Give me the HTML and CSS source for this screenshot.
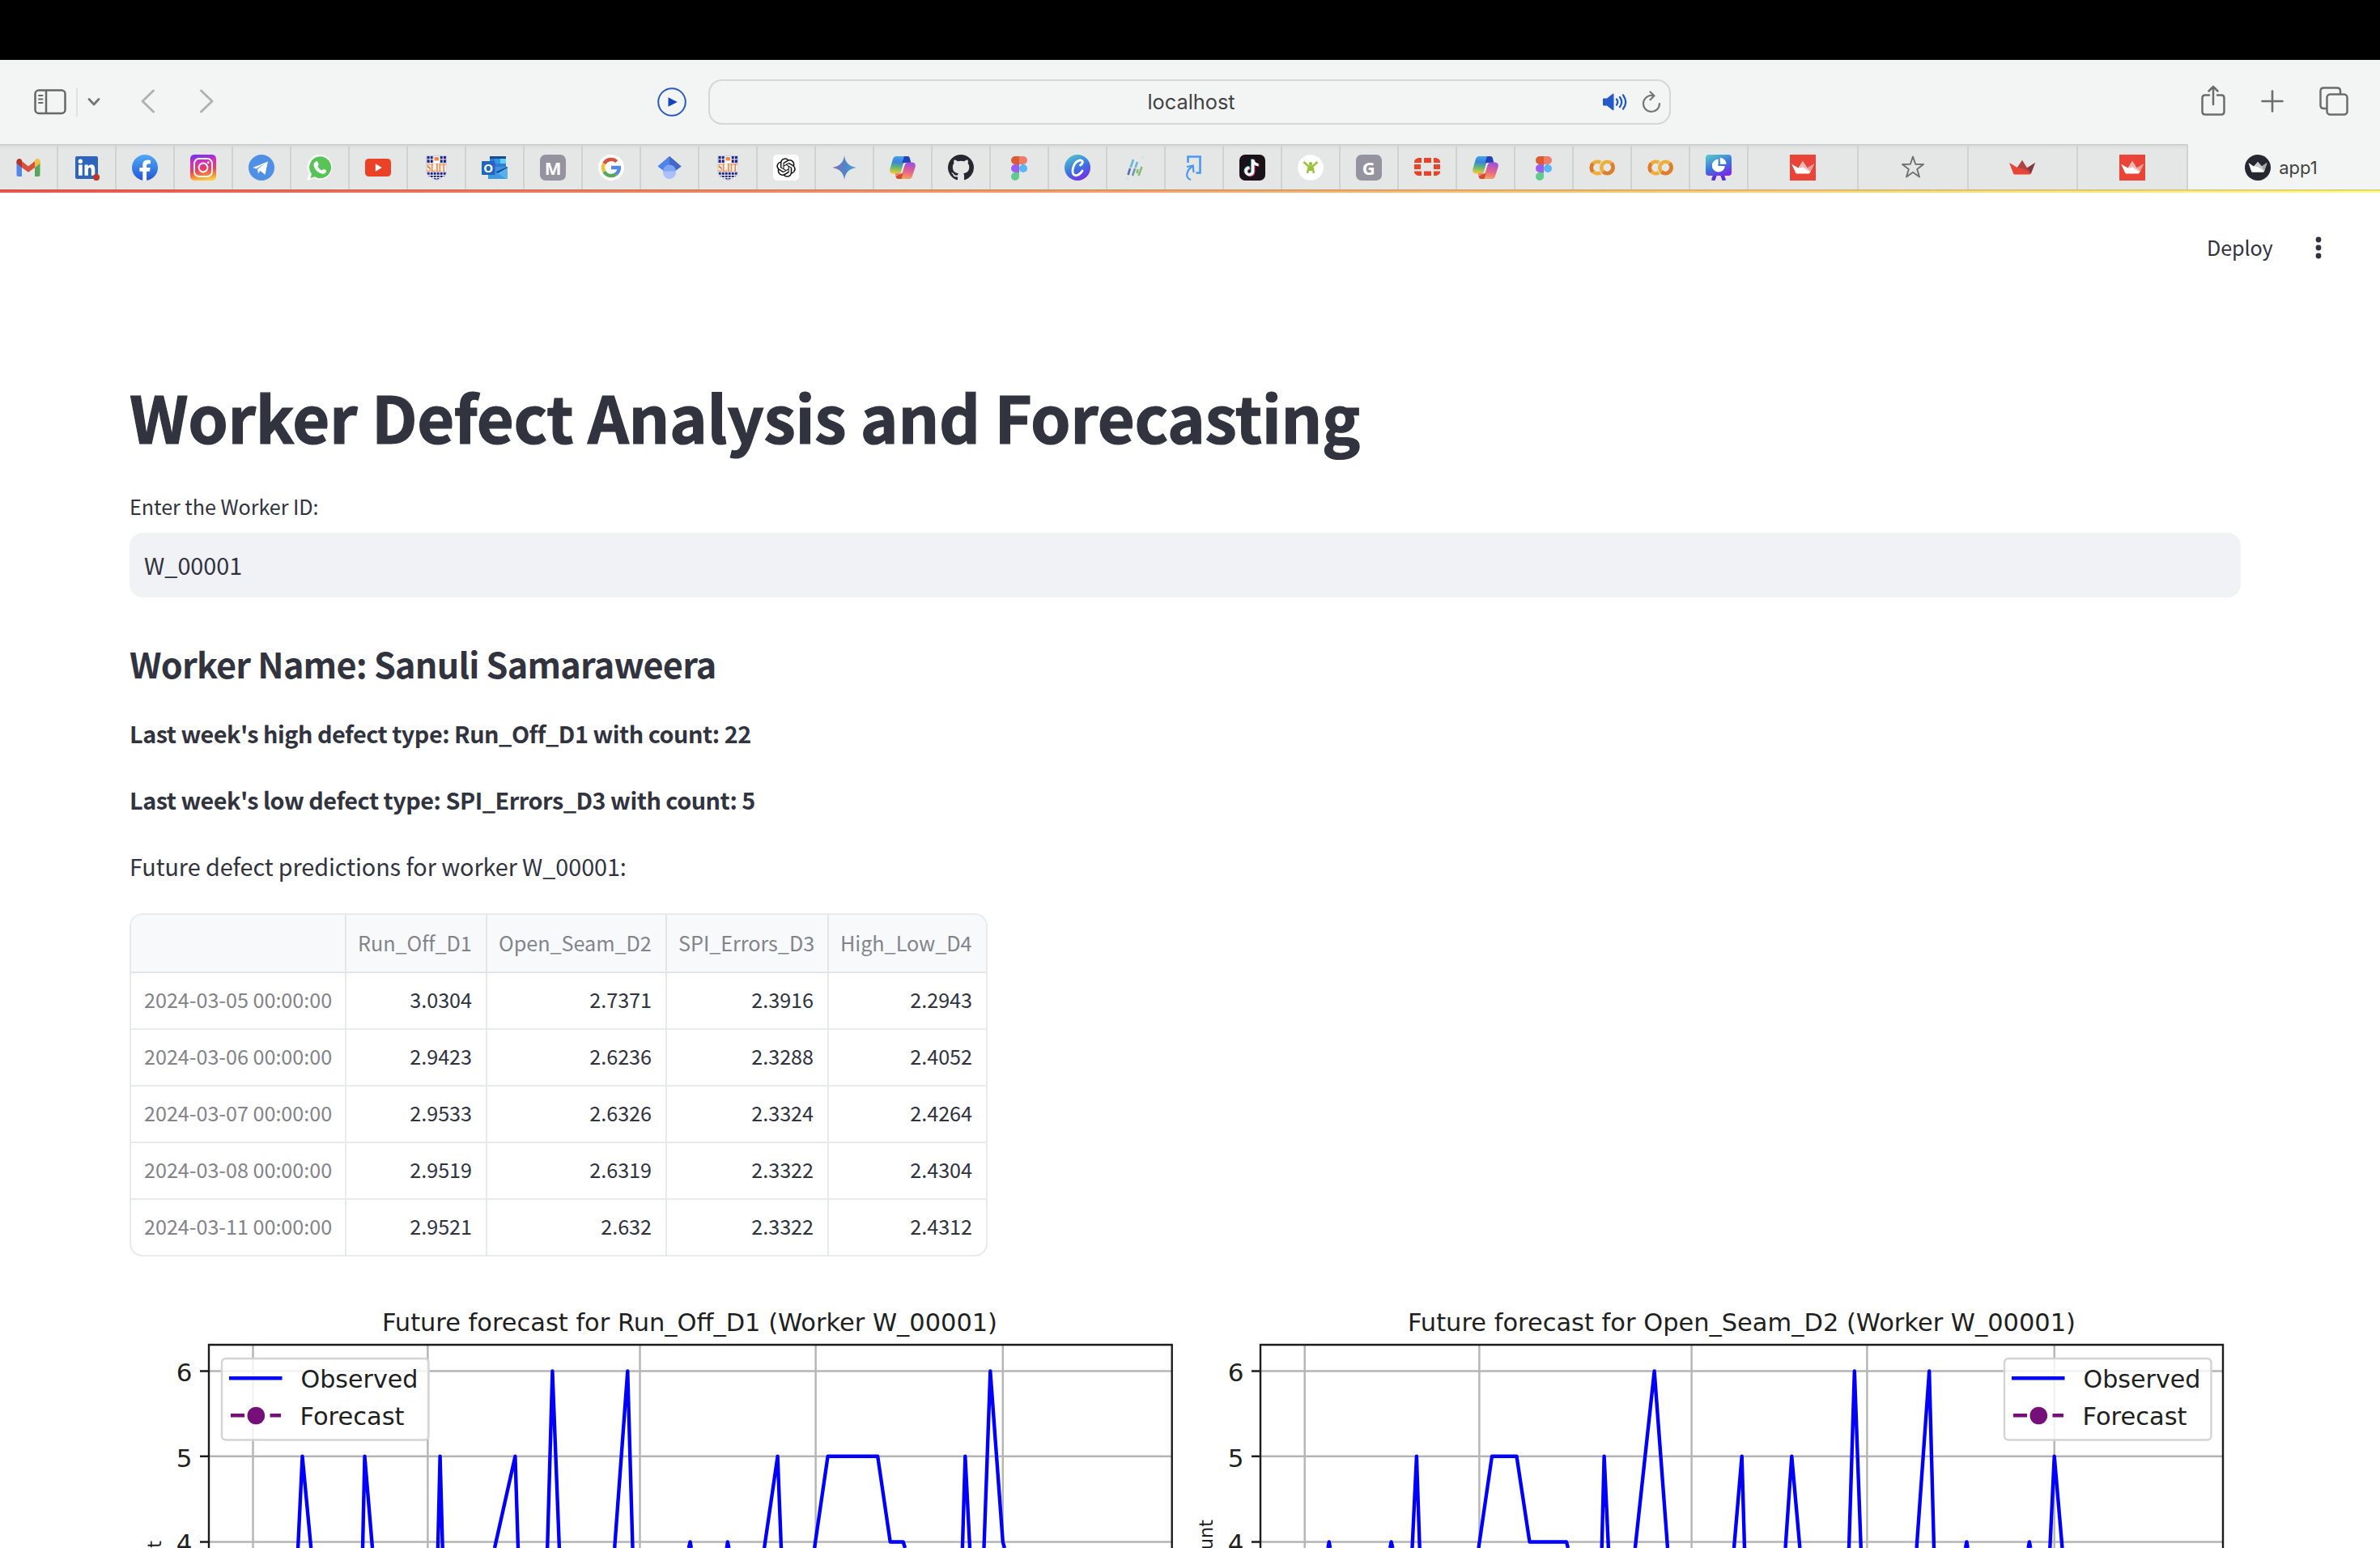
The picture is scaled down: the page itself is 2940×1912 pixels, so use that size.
FILE: index.html
```html
<!DOCTYPE html>
<html lang="en">
<head>
<meta charset="utf-8">
<title>app1</title>
<link rel="stylesheet" href="styles.css">
</head>
<body>
<svg class="defs" width="0" height="0" aria-hidden="true">
  <defs>
    <linearGradient id="g-fb" x1="0" y1="0" x2="0" y2="1"><stop offset="0" stop-color="#4fa9f7"/><stop offset="1" stop-color="#2457d6"/></linearGradient>
    <linearGradient id="g-ig" x1="0.2" y1="0" x2="0.35" y2="1"><stop offset="0" stop-color="#6a34f5"/><stop offset="0.3" stop-color="#d52fc0"/><stop offset="0.6" stop-color="#f03a5c"/><stop offset="0.85" stop-color="#f88a38"/><stop offset="1" stop-color="#fbc840"/></linearGradient>
    <linearGradient id="g-gem" x1="0" y1="0" x2="1" y2="0"><stop offset="0" stop-color="#8a68b4"/><stop offset="0.55" stop-color="#4f86c9"/><stop offset="1" stop-color="#4aa3e0"/></linearGradient>
    <linearGradient id="g-canva" x1="0.2" y1="0" x2="0.7" y2="1"><stop offset="0" stop-color="#55c4cc"/><stop offset="0.55" stop-color="#3b72e0"/><stop offset="1" stop-color="#7a2be6"/></linearGradient>
    <linearGradient id="g-cpa" x1="0.5" y1="0" x2="0.4" y2="1"><stop offset="0" stop-color="#3fa4ee"/><stop offset="0.35" stop-color="#3c83d8"/><stop offset="0.65" stop-color="#62b872"/><stop offset="1" stop-color="#f2c935"/></linearGradient>
    <linearGradient id="g-cpb" x1="0.6" y1="0" x2="0.4" y2="1"><stop offset="0" stop-color="#9a50e2"/><stop offset="0.5" stop-color="#e3608f"/><stop offset="1" stop-color="#f7a456"/></linearGradient>

    <symbol id="i-sliit" viewBox="0 0 32 32">
      <path d="M4 1.500h24.500v20q0 7-12.250 10Q4 28.500 4 21.500z" fill="#1c2580" stroke="#c6c8e4" stroke-width="1.200"/>
      <path d="M8.200 2v28M12.200 2v29M16.200 2v29M20.200 2v29M24.200 2v28M4.500 5.800h23.500M5 25.300h22M8 28.500h17" stroke="#fff" stroke-width="1"/>
      <path d="M4.200 10h24.200v11.800H4.200z" fill="#fdf6f2"/>
      <path d="M12.500 2h7.500v8h-7.500z" fill="#fff"/><path d="M13.500 3h5.500v4.500h-5.500z" fill="#f08a4a"/>
      <text x="16.200" y="21" text-anchor="middle" textLength="24" lengthAdjust="spacingAndGlyphs" class="t-sliit">SLIIT</text>
    </symbol>
    <symbol id="i-copilot" viewBox="0 0 32 32">
      <path d="M8 2h13.500q3 0 3.500 3l1 4h-7l-4 12q-1 2.500-4 2.500H4Q-.8 23 .4 17.500L4 5.500Q5 2 8 2z" fill="url(#g-cpa)"/>
      <path d="M18 2h4q2.500 0 3 3l1.200 5H15.500z" fill="#2442b8"/>
      <path d="M24 30H11q-3 0-3.500-3l-.9-4H14l4-11q1-2.500 4-2.500h6q4.800.5 3.600 6L28 26.500Q27 30 24 30z" fill="url(#g-cpb)"/>
      <path d="M14.500 30H11q-3 0-3.500-3.500H8l6.500-3h2z" fill="#d8482c"/>
      <path d="M17 10.500h4q-2 .5-2.700 3l-2.500 8.500q-.7 1.700-3.800 1.800 1.500-.5 2-2.300z" fill="#eef0ef"/>
    </symbol>
    <symbol id="i-figma" viewBox="0 0 32 32">
      <path d="M16 2h-5a5 5 0 0 0 0 10h5z" fill="#dd5b33"/><path d="M16 2h5a5 5 0 0 1 0 10h-5z" fill="#ee7c6a"/>
      <path d="M16 12h-5a5 5 0 0 0 0 10h5z" fill="#9a5cf5"/><circle cx="21" cy="17" r="5" fill="#58b6f8"/>
      <path d="M16 22h-5a5 5 0 1 0 5 5z" fill="#60cc8c"/>
    </symbol>
    <symbol id="i-colab" viewBox="0 0 32 32">
      <g fill="none" stroke-width="4.600"><path d="M14.200 9.800a7.300 7.300 0 1 0 0 12.400" stroke="#eeae3b"/><path d="M4.800 10.800a7.300 7.300 0 0 0 0 10.400" stroke="#dc7e30"/>
      <circle cx="22.500" cy="16" r="7.300" stroke="#eeae3b"/><path d="M27.600 10.800a7.300 7.300 0 0 1-10.200 10.400" stroke="#dc7e30"/></g>
    </symbol>
    <symbol id="i-crown-red" viewBox="0 0 32 32">
      <path d="M0 0h32v32H0z" fill="#ea4439"/>
      <path d="M2 11.500l8.500 5L16 8l5.500 8.500L30 11.500 25 22q-.5 1.500-2 1.500H9q-1.500 0-2-1.500z" fill="#fff"/>
      <path d="M16 8l5.500 8.500 3 4.500-8-5.500-5.500 1z" fill="#f7b5b1"/><path d="M30 11.500L25 21l-3.500-4.500z" fill="#f49a95"/>
    </symbol>
  </defs>
</svg>

<div class="menubar"></div>

<header class="toolbar">
  <div class="tools tools-left">
    <svg class="ic-side" viewBox="0 0 40 32"><g fill="none" stroke="#666867" stroke-width="2.500"><rect x="1.500" y="1.500" width="37" height="28.500" rx="4.500"/><path d="M15 2v28"/><path d="M6 8h4.500M6 12.500h4.500M6 17h4.500" stroke-width="2" stroke-linecap="round"/></g></svg>
    <span class="divider"></span>
    <svg class="ic-chev" viewBox="0 0 16 12"><path d="M2 2.500l6 6.500 6-6.500" fill="none" stroke="#747675" stroke-width="2.800" stroke-linecap="round" stroke-linejoin="round"/></svg>
    <svg class="ic-back" viewBox="0 0 18 30"><path d="M15.500 2L2 15l13.500 13" fill="none" stroke="#b0b2b1" stroke-width="2.900" stroke-linecap="round" stroke-linejoin="round"/></svg>
    <svg class="ic-fwd" viewBox="0 0 18 30"><path d="M2.500 2L16 15 2.500 28" fill="none" stroke="#b0b2b1" stroke-width="2.900" stroke-linecap="round" stroke-linejoin="round"/></svg>
  </div>
  <svg class="ic-play" viewBox="0 0 38 38"><circle cx="19" cy="19" r="16.800" fill="none" stroke="#2c58c8" stroke-width="2"/><path d="M14.500 13.200l11.300 5.800-11.300 5.800z" fill="#1544c0"/></svg>
  <div class="address">
    <span class="host">localhost</span>
    <svg class="ic-sound" viewBox="0 0 32 26"><path d="M1 9.500q0-1 1-1h4l7-5.500q1.500-1 1.500.5v19q0 1.500-1.500.5L6 17.500H2q-1 0-1-1z" fill="#2459c9"/><path d="M18 9.500q2.500 3.500 0 7M22 7q4.500 6 0 12M26 4.500q6.500 8.500 0 17" fill="none" stroke="#2459c9" stroke-width="2.300" stroke-linecap="round"/></svg>
    <svg class="ic-reload" viewBox="0 0 24 30"><path d="M14.500 7.300A10 10 0 1 0 22 17" fill="none" stroke="#747675" stroke-width="2.200" stroke-linecap="round"/><path d="M10.500 2.500l5 4.700-5 5" fill="none" stroke="#747675" stroke-width="2.200" stroke-linecap="round" stroke-linejoin="round"/></svg>
  </div>
  <div class="tools tools-right">
    <svg class="ic-share" viewBox="0 0 30 38"><g fill="none" stroke="#6b6d6c" stroke-width="2.500" stroke-linecap="round" stroke-linejoin="round"><path d="M10 12.500H5q-3.500 0-3.500 3.500v17q0 3.500 3.500 3.500h20q3.500 0 3.500-3.500V16q0-3.500-3.500-3.500h-5"/><path d="M15 24V2M9.500 7.500L15 2l5.500 5.500"/></g></svg>
    <svg class="ic-plus" viewBox="0 0 28 28"><path d="M14 1.500v25M1.500 14h25" stroke="#6b6d6c" stroke-width="2.600" stroke-linecap="round"/></svg>
    <svg class="ic-tabs" viewBox="0 0 36 36"><g fill="none" stroke="#6b6d6c" stroke-width="2.500"><path d="M9 27H5.500Q1.500 27 1.500 23V5.500q0-4 4-4H22q4 0 4 4V9"/><rect x="9.500" y="9.500" width="25" height="25" rx="4"/></g></svg>
  </div>
</header>

<nav class="tabs">
  <div class="tab"><svg viewBox="0 0 32 32"><path d="M1.500 8v17q0 2 2 2H8V12z" fill="#5387ec"/><path d="M30.500 8v17q0 2-2 2H24V12z" fill="#58a55d"/><path d="M8 16V8l8 6.500L24 8v8l-8 5.800z" fill="#d9503f"/><path d="M1.500 8.500q0-3.500 3.500-3.500 1 0 2 .8l1 1V16l-6.500-5z" fill="#b4332b"/><path d="M30.500 8.500Q30.500 5 27 5q-1 0-2 .8L24 7v9l6.500-5z" fill="#f3bf42"/></svg></div>
  <div class="tab"><svg viewBox="0 0 32 32"><rect x="2" y="2" width="28" height="28" rx="2" fill="#2c65bb"/><circle cx="8.300" cy="8.300" r="2.700" fill="#fff"/><path d="M6 12.500h4.700v13.300H6zM13.500 12.500h4.300v2q1.500-2.300 4.200-2.300 4.300 0 4.300 5.800v7.800h-4.500v-7q0-2.900-2-2.900-1.900 0-1.900 3v6.900h-4.400z" fill="#fff"/><circle cx="28" cy="28" r="4.200" fill="#c1352a"/></svg></div>
  <div class="tab"><svg viewBox="0 0 32 32"><circle cx="16" cy="16" r="16" fill="url(#g-fb)"/><path d="M13.300 32V20.700H9.400V16h3.900v-3.500q0-6 6-6 1.900 0 3.800.4v4.300h-2.300q-2.700 0-2.700 2.600V16h4.600l-.8 4.700h-3.800V32z" fill="#fff"/></svg></div>
  <div class="tab"><svg viewBox="0 0 32 32"><rect width="32" height="32" rx="5" fill="url(#g-ig)"/><g fill="none" stroke="#fff" stroke-width="2"><rect x="5" y="5" width="22" height="22" rx="6"/><circle cx="16" cy="16" r="5.400"/></g><circle cx="22.200" cy="9.800" r="1.400" fill="#fff"/></svg></div>
  <div class="tab"><svg viewBox="0 0 32 32"><circle cx="16" cy="16" r="16" fill="#4f8fe6"/><path d="M5.500 16L24 8.500l-3.500 16.300L14.500 20l-2.700 3.300-.6-5.300L20 11.300 9.500 17.600z" fill="#fff"/></svg></div>
  <div class="tab"><svg viewBox="0 0 32 32"><path d="M16.500 0A15.500 15.500 0 1 1 9 29.300L0 32l2.500-8.800A15.500 15.500 0 0 1 16.500 0z" fill="#fbfdfb"/><path d="M16.500 2.300a13.500 13.500 0 1 1-7 25l-5 1.700 1.500-5a13.500 13.500 0 0 1 10.500-21.700z" fill="#58c357"/><path d="M11.500 8.500q1.500-.5 2 .6l1.200 3q.2.700-1.400 2.500 2 3.700 5.400 5 1.500-2 2-1.900l3.200 1.500q.6.600-.2 2.500-1.500 2.200-4 2-8.500-1.500-11.200-10-.2-4 3-5.200z" fill="#fff"/></svg></div>
  <div class="tab"><svg viewBox="0 0 32 32"><rect y="5" width="32" height="22" rx="4.500" fill="#ea4127"/><path d="M12.800 11.300l8 4.700-8 4.700z" fill="#fff"/></svg></div>
  <div class="tab"><svg><use href="#i-sliit"/></svg></div>
  <div class="tab"><svg viewBox="0 0 32 32"><path d="M10 2h20v14H10z" fill="#2f7cd0"/><path d="M10 2h20v3H10z" fill="#194a92"/><path d="M23 5h7v6h-7z" fill="#5ed0fb"/><path d="M16 5h7v6h-7z" fill="#3797e4"/><path d="M8 15h24v15H8z" fill="#3a94e0"/><path d="M32 15v14L17 21.500z" fill="#1c4b97"/><path d="M8 30l24-14v14z" fill="#55b0ec"/><path d="M8 15v15h22z" fill="#3f99e2"/><rect y="8" width="16.500" height="17" rx="1" fill="#2165c0"/><text x="8.200" y="21.500" text-anchor="middle" class="t-o">O</text></svg></div>
  <div class="tab"><svg viewBox="0 0 32 32"><rect width="32" height="32" rx="7" fill="#94939f"/><text x="16" y="25" text-anchor="middle" class="t-letter">M</text></svg></div>
  <div class="tab"><svg viewBox="0 0 32 32"><circle cx="16" cy="16" r="16" fill="#fff"/><g fill="none" stroke-width="4.400"><path d="M22.800 8.500A10 10 0 0 0 7.300 11" stroke="#d9503f"/><path d="M7.300 11a10 10 0 0 0 0 10" stroke="#f3bf42"/><path d="M7.300 21a10 10 0 0 0 15 2.800" stroke="#58a55d"/><path d="M22.300 23.800Q26 20.500 25.800 16H16" stroke="#5387ec"/></g></svg></div>
  <div class="tab"><svg viewBox="0 0 32 32"><path d="M1.500 14.500L16 2v12z" fill="#5c8cf0"/><path d="M16 2l14.500 12.500-6.500 5L8 19.500l-6.500-5z" fill="#4f83ec"/><path d="M16 2l14.500 12.500-6.500 5-8-5z" fill="#4468c4"/><circle cx="16" cy="22" r="8" fill="#a8c1fa"/><path d="M8 20.500a8 8 0 0 1 16 0z" fill="#7fa5f5"/></svg></div>
  <div class="tab"><svg><use href="#i-sliit"/></svg></div>
  <div class="tab"><svg viewBox="0 0 32 32"><rect width="32" height="32" rx="5" fill="#fff"/><g transform="translate(4.300 4.300) scale(.98)"><path fill="#151515" d="M22.282 9.821a5.985 5.985 0 0 0-.516-4.910 6.046 6.046 0 0 0-6.510-2.900A6.065 6.065 0 0 0 4.981 4.182a5.985 5.985 0 0 0-3.998 2.900 6.046 6.046 0 0 0 .743 7.097 5.980 5.980 0 0 0 .510 4.911 6.051 6.051 0 0 0 6.515 2.900A5.985 5.985 0 0 0 13.260 24a6.056 6.056 0 0 0 5.772-4.206 5.990 5.990 0 0 0 3.998-2.900 6.056 6.056 0 0 0-.748-7.073zM13.260 22.430a4.476 4.476 0 0 1-2.876-1.040l.141-.081 4.779-2.758a.795.795 0 0 0 .393-.681v-6.737l2.020 1.168a.071.071 0 0 1 .038.052v5.583a4.504 4.504 0 0 1-4.495 4.494zM3.600 18.304a4.471 4.471 0 0 1-.535-3.014l.142.085 4.783 2.759a.771.771 0 0 0 .780 0l5.843-3.369v2.332a.080.080 0 0 1-.033.062L9.740 19.950a4.500 4.500 0 0 1-6.140-1.646zM2.341 7.896a4.485 4.485 0 0 1 2.366-1.973V11.600a.766.766 0 0 0 .388.676l5.815 3.355-2.020 1.168a.076.076 0 0 1-.071 0l-4.830-2.786A4.504 4.504 0 0 1 2.341 7.896zm16.597 3.855l-5.833-3.387L15.119 7.200a.076.076 0 0 1 .071 0l4.830 2.791a4.494 4.494 0 0 1-.676 8.105v-5.678a.790.790 0 0 0-.407-.667zm2.010-3.023l-.141-.085-4.774-2.782a.776.776 0 0 0-.785 0L9.409 9.230V6.897a.066.066 0 0 1 .028-.061l4.830-2.787a4.500 4.500 0 0 1 6.680 4.660zm-12.640 4.135l-2.020-1.164a.080.080 0 0 1-.038-.057V6.075a4.500 4.500 0 0 1 7.375-3.453l-.142.080L8.704 5.460a.795.795 0 0 0-.393.681zm1.097-2.365l2.602-1.500 2.607 1.500v2.999l-2.597 1.500-2.607-1.500z"/></g></svg></div>
  <div class="tab"><svg viewBox="0 0 32 32"><path d="M16 1q1.500 13 15 15-13.500 2-15 15-1.500-13-15-15Q14.500 14 16 1z" fill="url(#g-gem)"/></svg></div>
  <div class="tab"><svg><use href="#i-copilot"/></svg></div>
  <div class="tab"><svg viewBox="0 0 16 16"><path fill="#24292f" d="M8 0C3.580 0 0 3.580 0 8c0 3.540 2.290 6.530 5.470 7.590.4.070.55-.170.55-.380 0-.190-.010-.820-.010-1.490-2.010.370-2.530-.490-2.690-.940-.090-.230-.480-.940-.820-1.130-.280-.150-.680-.520-.010-.530.630-.010 1.080.580 1.230.820.720 1.210 1.870.870 2.330.660.070-.520.280-.870.510-1.070-1.780-.2-3.640-.890-3.640-3.950 0-.870.310-1.590.820-2.150-.080-.2-.360-1.020.080-2.120 0 0 .670-.210 2.200.820.640-.180 1.320-.270 2-.270s1.360.090 2 .270c1.530-1.040 2.200-.820 2.200-.820.440 1.100.160 1.920.080 2.120.510.560.820 1.270.820 2.150 0 3.070-1.870 3.750-3.650 3.950.290.250.540.730.540 1.480 0 1.070-.010 1.930-.010 2.200 0 .210.150.460.550.380A8.010 8.010 0 0 0 16 8c0-4.420-3.580-8-8-8z"/></svg></div>
  <div class="tab"><svg><use href="#i-figma"/></svg></div>
  <div class="tab"><svg viewBox="0 0 32 32"><circle cx="16" cy="16" r="16" fill="url(#g-canva)"/><path d="M19.500 13q3-1.500 2.800-4.500-.7-2-3.500-1.500-5 1-7.500 7-2.200 6-.8 9.500 1.800 3 5 2 4-1.300 6.500-5.500" fill="none" stroke="#fff" stroke-width="2.800" stroke-linecap="round"/></svg></div>
  <div class="tab"><svg viewBox="0 0 32 32" class="soft"><path d="M13 6L9.500 16M18 9l-2.500 7" stroke="#6ab7dd" stroke-width="2.600"/><path d="M9 17l-2.500 8" stroke="#4f6fae" stroke-width="2.600"/><path d="M15 17l-3 9" stroke="#6f95a8" stroke-width="2.400"/><path d="M23.500 15l-4 11M18.500 18l-1 5" stroke="#86bf78" stroke-width="2.600"/><path d="M22 5l4-3M4 29l4 2" stroke="#cfe4ea" stroke-width="2"/></svg></div>
  <div class="tab"><svg viewBox="0 0 32 32"><g fill="none" stroke="#4b98f5" stroke-width="2.600"><path d="M8.500 10V2.500h15v20h-5"/><path d="M12 31q-6-2-4.500-8 1-5 6.500-8.500M7 15l7.800-1.500.6 8.500" stroke-width="2.200"/></g></svg></div>
  <div class="tab"><svg viewBox="0 0 32 32"><rect width="32" height="32" rx="7" fill="#1b1219"/><g fill="none" stroke-width="3.200"><path d="M16.800 6v14.500a4.300 4.300 0 1 1-4.300-4.300M16.800 7q1 5 6.700 5.600" stroke="#5ee0e2" transform="translate(-1 -.6)"/><path d="M16.800 6v14.500a4.300 4.300 0 1 1-4.300-4.300M16.800 7q1 5 6.700 5.600" stroke="#e8355c" transform="translate(1 .8)"/><path d="M16.800 6v14.500a4.300 4.300 0 1 1-4.300-4.300M16.800 7q1 5 6.700 5.600" stroke="#fff"/></g></svg></div>
  <div class="tab"><svg viewBox="0 0 32 32"><circle cx="16" cy="16" r="15.800" fill="#fff"/><circle cx="16" cy="11.300" r="2.200" fill="#9bc23c"/><path d="M7.500 9l6 5.500h5l6-5.500M16 14v5M13.500 16l-1.500 7M18.500 16l1.500 7" fill="none" stroke="#9bc23c" stroke-width="2.500"/><path d="M12.500 14h7l-1 6h-5z" fill="#9bc23c"/></svg></div>
  <div class="tab"><svg viewBox="0 0 32 32"><rect width="32" height="32" rx="7" fill="#94939f"/><text x="15.800" y="25" text-anchor="middle" class="t-letter">G</text></svg></div>
  <div class="tab"><svg viewBox="0 0 32 32"><path d="M12 4h9v6h-9zM12 20.500h9V26h-9zM0 12h8v6H0zM24 12h8v6h-8zM5 4h4v6H0V8q1-3 5-4zM27 4h-3v6h8V8q-1-3-5-4zM0 20.500h9V26H5q-4-1-5-4zM24 20.500h8V22q-1 3-5 4h-3z" fill="#ea4127"/></svg></div>
  <div class="tab"><svg><use href="#i-copilot"/></svg></div>
  <div class="tab"><svg><use href="#i-figma"/></svg></div>
  <div class="tab"><svg><use href="#i-colab"/></svg></div>
  <div class="tab"><svg><use href="#i-colab"/></svg></div>
  <div class="tab"><svg viewBox="0 0 32 32"><path d="M12 24l-3 8M20 24l3 8" stroke="#5b2fe0" stroke-width="4.500"/><rect width="32" height="26" rx="4" fill="url(#g-canva)"/><path d="M15.500 5.500A8 8 0 1 0 23.800 14h-8.300z" fill="#fff"/><path d="M17.800 3.800a8 8 0 0 1 7.700 8h-7.700z" fill="#fff"/></svg></div>
  <div class="tab wide"><svg><use href="#i-crown-red"/></svg></div>
  <div class="tab wide"><svg viewBox="0 0 32 32"><path d="M16 2.500l3.200 9.300 9.800.2-7.800 6 2.800 9.500-8-5.700-8 5.700 2.800-9.500L3 12l9.800-.2z" fill="none" stroke="#6f7170" stroke-width="1.900" stroke-linejoin="round"/></svg></div>
  <div class="tab wide"><svg viewBox="0 0 32 32"><path d="M0 10l10 6 6-9 6 9.500L32 10l-5 13q-.5 1.500-2 1.500H7q-1.500 0-2-1.500z" fill="#ea4439"/><path d="M16 7l6 9.500 5 7-10-6-7-1.500z" fill="#ad4542"/><path d="M32 10l-5 13-5-6.500z" fill="#7c3a42"/></svg></div>
  <div class="tab wide"><svg><use href="#i-crown-red"/></svg></div>
  <div class="tab active"><svg viewBox="0 0 32 32"><circle cx="16" cy="16" r="16" fill="#262730"/><path d="M4.500 10l6.500 4.500L16 9l5 5.500L27.500 10 24 20.500q-.5 1.300-1.500 1.300h-13Q8.500 21.800 8 20.500z" fill="#fff"/><path d="M16 9l5 5.500 3 6-7-5-5-1z" fill="#c9c9cb"/><path d="M27.500 10L24 20.500l-3-6z" fill="#a5a5a9"/></svg><span>app1</span></div>
</nav>

<div class="decoration"></div>

<div class="appbar">
  <span class="deploy">Deploy</span>
  <svg class="ic-menu" viewBox="0 0 8 28"><g fill="#31333f"><circle cx="4" cy="4" r="3.400"/><circle cx="4" cy="14" r="3.400"/><circle cx="4" cy="24" r="3.400"/></g></svg>
</div>

<main class="page">
  <h1>Worker Defect Analysis and Forecasting</h1>
  <label class="label">Enter the Worker ID:</label>
  <div class="input">W_00001</div>
  <h3>Worker Name: Sanuli Samaraweera</h3>
  <p class="strong high">Last week's high defect type: Run_Off_D1 with count: 22</p>
  <p class="strong low">Last week's low defect type: SPI_Errors_D3 with count: 5</p>
  <p class="intro">Future defect predictions for worker W_00001:</p>

  <div class="frame">
    <table>
      <colgroup><col class="c0"><col class="c1"><col class="c2"><col class="c3"><col class="c4"></colgroup>
      <thead><tr><th></th><th>Run_Off_D1</th><th>Open_Seam_D2</th><th>SPI_Errors_D3</th><th>High_Low_D4</th></tr></thead>
      <tbody>
        <tr><th>2024-03-05 00:00:00</th><td>3.0304</td><td>2.7371</td><td>2.3916</td><td>2.2943</td></tr>
        <tr><th>2024-03-06 00:00:00</th><td>2.9423</td><td>2.6236</td><td>2.3288</td><td>2.4052</td></tr>
        <tr><th>2024-03-07 00:00:00</th><td>2.9533</td><td>2.6326</td><td>2.3324</td><td>2.4264</td></tr>
        <tr><th>2024-03-08 00:00:00</th><td>2.9519</td><td>2.6319</td><td>2.3322</td><td>2.4304</td></tr>
        <tr><th>2024-03-11 00:00:00</th><td>2.9521</td><td>2.632</td><td>2.3322</td><td>2.4312</td></tr>
      </tbody>
    </table>
  </div>

  <div class="charts">
    <svg class="chart" viewBox="160 1590 1304 322">
      <path class="grid" d="M312.500 1661V1912M528.400 1661V1912M790.500 1661V1912M1007.600 1661V1912M1238.800 1661V1912M258 1693.500H1448M258 1798.700H1448M258 1904.500H1448"/>
      <path class="series" d="M368.100 1912L373.500 1798.700 384.200 1912M448 1912L450.500 1798.700 460 1912M540.900 1912L543.600 1798.700 546.700 1912M611 1912L636.400 1798.700 640 1912M676.200 1912L682.400 1693.500 690.900 1912M759.200 1912L775.300 1693.500 781.500 1912M850.800 1912L852.500 1904.500 853.900 1912M897.700 1912L898.800 1904.500 900.500 1912M944.100 1912L960.600 1798.700 965 1912M1006.100 1912L1022.600 1798.700H1084.200L1099.700 1904.500H1115.700L1118 1912M1188.900 1912L1192.300 1798.700 1198 1912M1215.500 1912L1223.300 1693.500 1238.800 1904.500 1241 1912"/>
      <path class="spine" d="M258 1912V1661H1447.700V1912M247 1693.500H258M247 1798.700H258M247 1904.500H258"/>
      <text x="472" y="1643.700" textLength="760" lengthAdjust="spacingAndGlyphs" class="mpl">Future forecast for Run_Off_D1 (Worker W_00001)</text>
      <text x="237.500" y="1706" text-anchor="end" class="mpl">6</text><text x="237.500" y="1811.500" text-anchor="end" class="mpl">5</text><text x="237.500" y="1917" text-anchor="end" class="mpl">4</text>
      <text transform="translate(198.500 1903) rotate(-90)" text-anchor="end" class="mpl ylab">Run_Off_D1 Count</text>
      <g>
        <rect x="274" y="1678" width="255.500" height="100.500" rx="5" class="legend"/>
        <path d="M283 1702.300H348.500" class="blue"/><path d="M285 1748.300h17M333.500 1748.300h13.500" class="purple"/><circle cx="316.300" cy="1748.500" r="10.800" fill="#75107a"/>
        <text x="371.500" y="1714" textLength="145" lengthAdjust="spacingAndGlyphs" class="mpl">Observed</text><text x="370.500" y="1760" textLength="129" lengthAdjust="spacingAndGlyphs" class="mpl">Forecast</text>
      </g>
    </svg>
    <svg class="chart" viewBox="1464 1590 1304 322">
      <path class="grid" d="M1611.700 1661V1912M1827.400 1661V1912M2089.600 1661V1912M2306.400 1661V1912M2537.700 1661V1912M1557 1693.500H2746M1557 1798.700H2746M1557 1904.500H2746"/>
      <path class="series" d="M1640.500 1912L1641.800 1904.500 1643.100 1912M1717.200 1912L1718.600 1904.500 1720.500 1912M1744.500 1912L1749.900 1798.700 1753.700 1912M1826.500 1912L1843 1798.700H1873.500L1889.500 1904.500H1935L1937 1912M1978.700 1912L1981.600 1798.700 1986.900 1912M2019.900 1912L2043.600 1693.500 2060 1912M2142 1912L2151.700 1798.700 2155 1912M2205.500 1912L2213.300 1798.700 2223.400 1912M2284 1912L2290.800 1693.500 2298.800 1912M2367.600 1912L2383.200 1693.500 2389 1912M2428 1912L2429.400 1904.500 2430.800 1912M2505.500 1912L2506.900 1904.500 2508.300 1912M2532.300 1912L2537.700 1798.700 2547.500 1912"/>
      <path class="spine" d="M1557 1912V1661H2746V1912M1546 1693.500H1557M1546 1798.700H1557M1546 1904.500H1557"/>
      <text x="1739" y="1643.700" textLength="825" lengthAdjust="spacingAndGlyphs" class="mpl">Future forecast for Open_Seam_D2 (Worker W_00001)</text>
      <text x="1536.500" y="1706" text-anchor="end" class="mpl">6</text><text x="1536.500" y="1811.500" text-anchor="end" class="mpl">5</text><text x="1536.500" y="1917" text-anchor="end" class="mpl">4</text>
      <text transform="translate(1497.500 1877) rotate(-90)" text-anchor="end" class="mpl ylab">Open_Seam_D2 Count</text>
      <g transform="translate(2202 0)">
        <rect x="274" y="1678" width="255.500" height="100.500" rx="5" class="legend"/>
        <path d="M283 1702.300H348.500" class="blue"/><path d="M285 1748.300h17M333.500 1748.300h13.500" class="purple"/><circle cx="316.300" cy="1748.500" r="10.800" fill="#75107a"/>
        <text x="371.500" y="1714" textLength="145" lengthAdjust="spacingAndGlyphs" class="mpl">Observed</text><text x="370.500" y="1760" textLength="129" lengthAdjust="spacingAndGlyphs" class="mpl">Forecast</text>
      </g>
    </svg>
  </div>
</main>
</body>
</html>
```
FILE: styles.css
```css
* { box-sizing: border-box; }

body {
  margin: 0;
  width: 2940px;
  height: 1912px;
  overflow: hidden;
  background: #fff;
  color: #31333f;
  font-family: "Noto Sans CJK SC", "Noto Sans", sans-serif;
}

svg { display: block; flex: none; }
.defs { position: absolute; }

.menubar { height: 74px; background: #000; }

/* browser toolbar */
.toolbar {
  display: flex;
  align-items: center;
  height: 104px;
  padding: 0 39px 0 42px;
  background: #f3f5f4;
}
.tools { display: flex; align-items: center; }
.tools-left { width: 769px; }
.ic-side { width: 40px; height: 32px; margin-bottom: 1px; }
.divider { width: 2px; height: 36px; margin-left: 12px; background: #e0e2e1; }
.ic-chev { width: 16px; height: 12px; margin-left: 12px; }
.ic-back { width: 18px; height: 30px; margin-left: 50px; margin-bottom: 2px; }
.ic-fwd { width: 18px; height: 30px; margin-left: 54px; margin-bottom: 2px; }
.ic-play { width: 38px; height: 38px; margin-bottom: 1px; }
.address {
  display: flex;
  align-items: center;
  width: 1189px;
  height: 56px;
  margin-left: 26px;
  padding-right: 10px;
  border: 2px solid #d5d7d6;
  border-radius: 17px;
}
.host {
  flex: 1;
  padding-left: 87px;
  text-align: center;
  font: 25.300px/30px Inter, sans-serif;
  color: #414342;
}
.ic-sound { width: 32px; height: 26px; }
.ic-reload { width: 24px; height: 30px; margin-left: 17px; }
.tools-right { margin-left: auto; }
.ic-share { width: 30px; height: 38px; margin-bottom: 5px; }
.ic-plus { width: 28px; height: 28px; margin-left: 44px; margin-bottom: 3px; }
.ic-tabs { width: 36px; height: 36px; margin-left: 44px; margin-bottom: 3px; }

/* tab strip */
.tabs { display: flex; height: 56px; background: #e5e7e6; }
.tab {
  display: flex;
  align-items: center;
  justify-content: center;
  width: 72px;
  padding-top: 2px;
  border-right: 2px solid #d0d2d1;
  background: linear-gradient(#c0c2c1 0, #dcdedd 2px, #e5e7e6 7px);
}
.tab svg { width: 32px; height: 32px; }
.tab.wide { width: 135.750px; }
.tab.active {
  flex: 1;
  gap: 10px;
  padding-right: 7px;
  border: 0;
  background: #f3f5f4;
  font: 22px/30px Inter, sans-serif;
  color: #414342;
}
.soft { filter: blur(0.6px); fill: none; }
.t-sliit { font: bold 14px "Liberation Serif", serif; fill: #ef7a36; }
.t-o { font: bold 15px "Open Sans", sans-serif; fill: #fff; }
.t-letter { font: bold 22px "Open Sans", sans-serif; fill: #fff; }

.decoration {
  height: 4px;
  background: linear-gradient(rgba(90, 70, 40, 0.250) 1px, transparent 2px), linear-gradient(90deg, #f2544f, #f7b170 55%, #fdfb82);
}

.appbar {
  display: flex;
  align-items: center;
  height: 134px;
  padding-left: 2726px;
  font-size: 25.200px;
}
.deploy { width: 134px; line-height: 40px; letter-spacing: -0.150px; }
.ic-menu { width: 8px; height: 28px; margin-top: 2px; }

/* page content */
.page { padding: 88px 172px 0 160px; white-space: nowrap; }
h1, h3, p { margin: 0; }
h1 {
  font-size: 79.300px;
  font-weight: 700;
  line-height: 107px;
  letter-spacing: -0.300px;
  -webkit-text-stroke: 1.200px #31333f;
}
.label { display: block; margin-top: 37px; font-size: 25.200px; line-height: 42px; letter-spacing: -0.060px; }
.input {
  height: 80px;
  margin-top: 12px;
  padding-left: 18px;
  border-radius: 16px;
  background: #f0f2f6;
  font-size: 28.800px;
  line-height: 79px;
}
h3 { margin-top: 52px; font-size: 43.200px; font-weight: 600; line-height: 58px; letter-spacing: -0.800px; }
p { margin-top: 34px; font-size: 28.800px; line-height: 48px; letter-spacing: -0.080px; }
.high { margin-top: 34px; }
.strong { font-weight: 600; letter-spacing: -0.490px; }

.frame {
  width: 1060px;
  margin-top: 34px;
  border: 2px solid #e9eaeb;
  border-radius: 16px;
  overflow: hidden;
}
table { width: 1056px; table-layout: fixed; border-spacing: 0; font-size: 25.200px; line-height: 40px; letter-spacing: -0.040px; }
.c0 { width: 266px; } .c1 { width: 174px; } .c2 { width: 222px; } .c3 { width: 200px; } .c4 { width: 194px; }
th, td {
  height: 70px;
  padding: 0 17px 4px 16px;
  border-right: 2px solid #e9eaeb;
  border-bottom: 2px solid #e9eaeb;
  text-align: right;
  font-weight: 400;
}
th { color: #83848b; }
tbody th { padding-right: 16px; }
thead th { height: 72px; padding: 0 0 2px 14px; background: #f8f9fb; border-color: #e4e5e9; text-align: left; }
tr > :last-child { border-right: 0; }
tbody tr:last-child > * { height: 68px; border-bottom: 0; }

.charts { display: flex; margin-top: 38px; }
.chart { width: 1304px; height: 322px; }
.grid { fill: none; stroke: #b5b5b5; stroke-width: 2.400; }
.series { fill: none; stroke: #0000fb; stroke-width: 4.400; stroke-linejoin: round; }
.spine { fill: none; stroke: #1c1c1c; stroke-width: 2.400; }
.blue { stroke: #0000fb; stroke-width: 4.400; }
.purple { stroke: #75107a; stroke-width: 4.400; }
.legend { fill: #fff; fill-opacity: 0.820; stroke: #d4d4d4; stroke-width: 2.400; }
.mpl { font: 31px "DejaVu Sans", sans-serif; fill: #1f1f1f; }
.mpl.ylab { font-size: 22.500px; }
```
